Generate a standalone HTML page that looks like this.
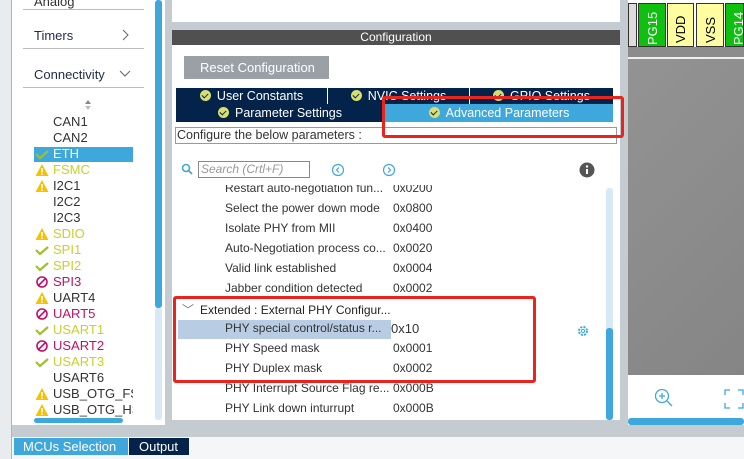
<!DOCTYPE html>
<html><head><style>
*{margin:0;padding:0;box-sizing:border-box}
body{width:744px;height:459px;overflow:hidden;position:relative;background:#f0f0f0;font-family:"Liberation Sans",sans-serif;font-size:12px;color:#333}
.a{position:absolute}
.t{position:absolute;white-space:nowrap}
.li{position:absolute;left:53px;font-size:13px;line-height:16px}
.ic{position:absolute;left:35px;width:14px;height:16px}
.row{position:absolute;left:225px;font-size:12px;color:#333;white-space:nowrap}
.val{position:absolute;left:393px;font-size:12px;color:#333}
.tab{position:absolute;background:#03234b;color:#fff;font-size:12.5px;line-height:17px;text-align:center;border-right:1px solid #fff}
.chk{display:inline-block;width:11px;height:11px;border-radius:50%;background:#d8df6e;vertical-align:-1px;margin-right:6px;position:relative}
.chk:after{content:"";position:absolute;left:3px;top:2px;width:3px;height:5px;border:solid #03234b;border-width:0 1.5px 1.5px 0;transform:rotate(45deg)}
</style></head><body>
<div class="a" style="left:0;top:0;width:12px;height:459px;background:#e9ecee;border-right:1px solid #b0b4b8"></div>
<div class="a" style="left:12px;top:0;width:153px;height:425px;background:#fff"></div>
<div class="t" style="left:34px;top:-6px;font-size:13px">Analog</div>
<div class="a" style="left:23px;top:9px;width:121px;height:1px;background:#bbb"></div>
<div class="t" style="left:34px;top:28px;font-size:13px;color:#1d2b4a">Timers</div>
<svg class="a" style="left:121px;top:29px" width="8" height="12"><path d="M2 1L7 6L2 11" stroke="#666" fill="none"/></svg>
<div class="a" style="left:23px;top:48px;width:121px;height:1px;background:#bbb"></div>
<div class="t" style="left:34px;top:67px;font-size:13px;color:#1d2b4a">Connectivity</div>
<svg class="a" style="left:119px;top:70px" width="12" height="8"><path d="M1 1L6 6L11 1" stroke="#666" fill="none"/></svg>
<div class="a" style="left:23px;top:87px;width:121px;height:1px;background:#bbb"></div>
<svg class="a" style="left:84px;top:99px" width="8" height="12"><path d="M4 1L7 5H1Z" fill="#888"/><path d="M4 11L7 7H1Z" fill="#bbb"/></svg>
<div class="a" style="left:34px;top:147px;width:99px;height:15px;background:#3ea8dc"></div>
<div class="a" style="left:155px;top:0;width:7px;height:308px;background:#3ea8dc;border-radius:3px"></div>
<div class="a" style="left:155px;top:308px;width:7px;height:112px;background:#d8e8f4;border-radius:3px"></div>
<div class="a" style="left:34px;top:418px;width:89px;height:5px;background:#3ea8dc;border-radius:3px"></div>
<div id="lst"></div>
<div class="a" style="left:12px;top:425px;width:616px;height:12px;background:#c4ccd2"></div>
<div class="a" style="left:12px;top:437px;width:732px;height:22px;background:#f4f6f7"></div>
<div class="t" style="left:14px;top:438px;width:114px;height:17px;background:#3ea8dc;color:#fff;font-size:13px;line-height:17px;padding-left:9px">MCUs Selection</div>
<div class="t" style="left:129px;top:438px;width:60px;height:17px;background:#03234b;color:#fff;font-size:13px;line-height:17px;padding-left:10px">Output</div>
<div class="a" style="left:165px;top:0;width:463px;height:425px;background:#c4ccd2"></div>
<div class="a" style="left:172px;top:0;width:448px;height:22px;background:#fff"></div>
<div class="a" style="left:172px;top:30px;width:448px;height:15px;background:#505050;color:#fff;text-align:center;font-size:12px;line-height:15px">Configuration</div>
<div class="a" style="left:172px;top:45px;width:448px;height:375px;background:#fff"></div>
<div class="a" style="left:184px;top:56px;width:145px;height:23px;background:#9aa0a6;color:#fff;font-size:13px;line-height:23px;padding-left:16px">Reset Configuration</div>
<div class="tab" style="left:176px;top:88px;width:152px"><span class="chk"></span>User Constants</div>
<div class="tab" style="left:328px;top:88px;width:142px"><span class="chk"></span>NVIC Settings</div>
<div class="tab" style="left:470px;top:88px;width:144px"><span class="chk"></span>GPIO Settings</div>
<div class="tab" style="left:176px;top:104px;width:209px;height:18px;line-height:18px"><span class="chk"></span>Parameter Settings</div>
<div class="tab" style="left:385px;top:104px;width:229px;height:18px;line-height:18px;background:#3ea8dc"><span class="chk"></span>Advanced Parameters</div>
<div class="a" style="left:175px;top:127px;width:442px;height:17px;border:1px solid #999;font-size:12.5px;line-height:15px;padding-left:1px">Configure the below parameters :</div>
<svg class="a" style="left:181px;top:163px" width="12" height="12"><circle cx="5" cy="5" r="3.5" stroke="#3ea8dc" stroke-width="1.6" fill="none"/><path d="M7.5 7.5L11 11" stroke="#3ea8dc" stroke-width="1.8"/></svg>
<div class="a" style="left:198px;top:161px;width:112px;height:17px;border:1px solid #888;font-style:italic;color:#999;font-size:12px;line-height:15px;padding-left:2px">Search (Crtl+F)</div>
<svg class="a" style="left:331px;top:163px" width="14" height="14"><circle cx="7" cy="7" r="5.5" stroke="#3ea8dc" fill="none" stroke-width="1.2"/><path d="M8 4.5L5.5 7L8 9.5" stroke="#3ea8dc" fill="none" stroke-width="1.2"/></svg>
<svg class="a" style="left:382px;top:163px" width="14" height="14"><circle cx="7" cy="7" r="5.5" stroke="#3ea8dc" fill="none" stroke-width="1.2"/><path d="M6 4.5L8.5 7L6 9.5" stroke="#3ea8dc" fill="none" stroke-width="1.2"/></svg>
<svg class="a" style="left:579px;top:162px" width="16" height="16"><circle cx="8" cy="8" r="7.5" fill="#555"/><rect x="7" y="7" width="2" height="5" fill="#fff"/><circle cx="8" cy="4.5" r="1.2" fill="#fff"/></svg>
<div class="a" style="left:172px;top:180px;width:448px;height:5px;background:#fff;z-index:2"></div>
<div class="a" style="left:178px;top:320px;width:213px;height:19px;background:#b8cce4"></div>
<div id="rows"></div>
<div class="t" style="left:182px;top:301px;font-size:12px;color:#222"><span style="color:#777;margin-right:6px">﹀</span>Extended : External PHY Configur...</div>
<svg class="a" style="left:577px;top:325px" width="12" height="12"><circle cx="6" cy="6" r="4" stroke="#3ea8dc" stroke-width="2" stroke-dasharray="2 1.2" fill="none"/><circle cx="6" cy="6" r="1.6" stroke="#3ea8dc" fill="none"/></svg>
<div class="a" style="left:606px;top:188px;width:7px;height:232px;background:#d8e8f4;border-radius:3px"></div>
<div class="a" style="left:606px;top:328px;width:7px;height:92px;background:#3ea8dc;border-radius:3px"></div>
<div class="a" style="left:620px;top:0;width:8px;height:437px;background:#c4ccd2"></div>
<div class="a" style="left:628px;top:0;width:116px;height:47px;background:#fff"></div>
<div class="a" style="left:628px;top:3px;width:9px;height:44px;background:#ddd;border:1px solid #333"></div>
<div class="a" style="left:638px;top:3px;width:28px;height:44px;background:#10c010;border:1px solid #333"></div>
<div class="a" style="left:667px;top:3px;width:27px;height:44px;background:#fefea0;border:1px solid #333"></div>
<div class="a" style="left:696px;top:3px;width:28px;height:44px;background:#fefea0;border:1px solid #333"></div>
<div class="a" style="left:725px;top:3px;width:19px;height:44px;background:#10c010;border:1px solid #333"></div>
<div class="t" style="left:645px;top:45px;transform:rotate(-90deg);transform-origin:0 0;color:#fff;font-size:13px">PG15</div>
<div class="t" style="left:673px;top:43px;transform:rotate(-90deg);transform-origin:0 0;color:#000;font-size:13px">VDD</div>
<div class="t" style="left:703px;top:43px;transform:rotate(-90deg);transform-origin:0 0;color:#000;font-size:13px">VSS</div>
<div class="t" style="left:731px;top:45px;transform:rotate(-90deg);transform-origin:0 0;color:#fff;font-size:13px">PG14</div>
<div class="a" style="left:628px;top:47px;width:116px;height:11px;background:#8c8c8c;border-bottom:1px solid #eee"></div>
<div class="a" style="left:628px;top:59px;width:116px;height:316px;background:linear-gradient(135deg,#939393,#858585)"></div>
<div class="a" style="left:628px;top:375px;width:116px;height:50px;background:#fff"></div>
<svg class="a" style="left:654px;top:388px" width="22" height="22"><circle cx="8" cy="8" r="6.5" stroke="#3ea8dc" stroke-width="1.3" fill="none"/><path d="M8 5V11M5 8H11M13 13L18 18" stroke="#3ea8dc" stroke-width="1.3"/></svg>
<svg class="a" style="left:724px;top:389px" width="20" height="20"><path d="M1 6V1H6M1 14V19H6M19 6V1H14M19 14V19H14" stroke="#3ea8dc" stroke-width="1.3" fill="none"/></svg>
<div class="a" style="left:628px;top:418px;width:116px;height:7px;background:#3ea8dc;border-radius:3px"></div>
<div class="a" style="left:628px;top:425px;width:116px;height:12px;background:#c4ccd2"></div>
<div class="a" style="left:382px;top:96px;width:242px;height:42px;border:3px solid #e8241c;border-radius:3px;z-index:5"></div>
<div class="a" style="left:173px;top:296px;width:363px;height:87px;border:3px solid #e8241c;border-radius:3px;z-index:5"></div>
<script>
var L=[["CAN1",0,"#333"],["CAN2",0,"#333"],["ETH","c","#fff"],["FSMC","w","#c8d02a"],["I2C1","w","#333"],["I2C2",0,"#333"],["I2C3",0,"#333"],["SDIO","w","#c8d02a"],["SPI1","c","#c8d02a"],["SPI2","c","#c8d02a"],["SPI3","n","#c0106a"],["UART4","w","#333"],["UART5","n","#c0106a"],["USART1","c","#c8d02a"],["USART2","n","#c0106a"],["USART3","c","#c8d02a"],["USART6",0,"#333"],["USB_OTG_FS","w","#333"],["USB_OTG_HS","w","#333"]];
var h="";L.forEach(function(x,i){var y=114+i*16;var ic="";
if(x[1]=="c")ic='<svg class="ic" style="top:'+y+'px" viewBox="0 0 14 16"><path d="M1 8L5 12L13 5" stroke="#9ec02a" stroke-width="2.2" fill="none"/></svg>';
if(x[1]=="w")ic='<svg class="ic" style="top:'+y+'px" viewBox="0 0 14 16"><path d="M7 2L13.5 14H0.5Z" fill="#f6c200"/><rect x="6.2" y="6" width="1.6" height="4.5" fill="#fff"/><rect x="6.2" y="11.5" width="1.6" height="1.5" fill="#fff"/></svg>';
if(x[1]=="n")ic='<svg class="ic" style="top:'+y+'px" viewBox="0 0 14 16"><circle cx="7" cy="8" r="5" stroke="#c0106a" stroke-width="1.6" fill="none"/><path d="M3.5 11.5L10.5 4.5" stroke="#c0106a" stroke-width="1.6"/></svg>';
h+=ic+'<div class="li" style="top:'+y+'px;color:'+x[2]+';width:80px;overflow:hidden">'+x[0]+'</div>';});
document.getElementById("lst").innerHTML=h;
var R=[["Restart auto-negotiation fun...","0x0200"],["Select the power down mode","0x0800"],["Isolate PHY from MII","0x0400"],["Auto-Negotiation process co...","0x0020"],["Valid link established","0x0004"],["Jabber condition detected","0x0002"],null,["PHY special control/status r...","0x10"],["PHY Speed mask","0x0001"],["PHY Duplex mask","0x0002"],["PHY Interrupt Source Flag re...","0x000B"],["PHY Link down inturrupt","0x000B"]];
h="";R.forEach(function(x,i){if(!x)return;var y=181+i*20;h+='<div class="row" style="top:'+y+'px">'+x[0]+'</div><div class="val" style="top:'+y+'px'+(i==7?';left:391px;font-size:13px':'')+'">'+x[1]+'</div>';});
document.getElementById("rows").innerHTML=h;
</script>
</body></html>
